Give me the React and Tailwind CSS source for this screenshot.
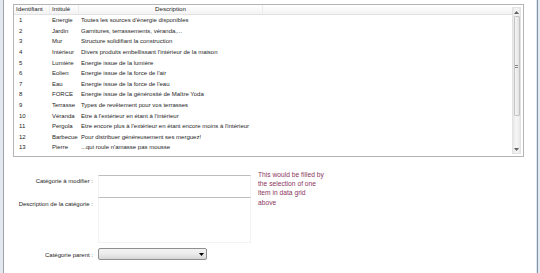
import React from "react";

const rows = [
  ["1", "Energie", "Toutes les sources d'énergie disponibles"],
  ["2", "Jardin", "Garnitures, terrassements, véranda,..."],
  ["3", "Mur", "Structure solidifiant la construction"],
  ["4", "Intérieur", "Divers produits embellissant l'intérieur de la maison"],
  ["5", "Lumière", "Energie issue de la lumière"],
  ["6", "Eolien", "Energie issue de la force de l'air"],
  ["7", "Eau", "Energie issue de la force de l'eau"],
  ["8", "FORCE", "Energie issue de la générosité de Maître Yoda"],
  ["9", "Terrasse", "Types de revêtement pour vos terrasses"],
  ["10", "Véranda", "Etre à l'extérieur en étant à l'intérieur"],
  ["11", "Pergola", "Etre encore plus à l'extérieur en étant encore moins à l'intérieur"],
  ["12", "Barbecue", "Pour distribuer généreusement ses merguez!"],
  ["13", "Pierre", "...qui roule n'amasse pas mousse"],
];

function ScrollBar() {
  return (
    <div className="w-[9px] my-[2px] mr-[2px] flex flex-col bg-gradient-to-r from-[#e8e8e8] via-[#f6f6f6] to-[#e8e8e8] border border-[#e2e2e2]">
      <div className="h-[8px] flex items-center justify-center">
        <svg width="5" height="3" viewBox="0 0 5 3"><path d="M0 3 L2.5 0 L5 3 Z" fill="#606060" /></svg>
      </div>
      <div className="h-[100px] mx-[0.5px] rounded-[1px] border border-[#c4c4c4] bg-gradient-to-r from-[#f6f6f6] to-[#e2e2e2] flex items-center justify-center">
        <div className="w-[3px] h-[3px] border-y border-[#8a8a8a]" />
      </div>
      <div className="flex-1" />
      <div className="h-[8px] flex items-center justify-center">
        <svg width="5" height="3" viewBox="0 0 5 3"><path d="M0 0 L2.5 3 L5 0 Z" fill="#606060" /></svg>
      </div>
    </div>
  );
}

export default function App() {
  return (
    <div className="w-[540px] h-[273px] bg-white flex overflow-hidden text-[#1e1e1e] font-['Liberation_Sans',Arial,sans-serif]">
      <div className="w-[4px] h-full flex">
        <div className="w-[3px] bg-[#e4e9ef]" />
        <div className="w-[1px] bg-[#9aa3ad]" />
      </div>
      <div className="flex-1 flex flex-col">
        <div className="ml-[9px] mt-[4px] w-[511px] h-[153px] border border-[#b4b4b4] flex">
          <div className="flex-1 flex flex-col text-[6px] leading-none">
            <div className="h-[10px] flex bg-gradient-to-b from-white to-[#f3f3f3] border-b border-[#e2e2e2] text-[6.2px] whitespace-nowrap">
              <div className="w-[36px] pl-[2px] flex items-center border-r border-[#ececec]">Identifiant</div>
              <div className="w-[29px] pl-[2px] flex items-center border-r border-[#ececec]">Intitulé</div>
              <div className="w-[184px] flex items-center justify-center border-r border-[#ececec]">Description</div>
              <div className="flex-1" />
            </div>
            {rows.map((r) => (
              <div key={r[0]} className="h-[10.6px] flex items-center whitespace-nowrap">
                <div className="w-[36px] pl-[5px]">{r[0]}</div>
                <div className="w-[29px] pl-[2px]">{r[1]}</div>
                <div className="pl-[2px]">{r[2]}</div>
              </div>
            ))}
          </div>
          <ScrollBar />
        </div>
        <div className="flex mt-[18px] text-[6px] leading-none">
          <div className="w-[89px] flex flex-col items-end">
            <div className="h-[22px] pt-[3px]">Catégorie à modifier :</div>
            <div className="h-[46px] pt-[4px]">Description de la catégorie :</div>
            <div className="h-[5px]" />
            <div className="h-[13px] flex items-center">Catégorie parent :</div>
          </div>
          <div className="ml-[5px] w-[153px] flex flex-col">
            <div className="h-[22px] border-t border-[#bdbdbd] border-x border-x-[#f3f3f3]" />
            <div className="h-[46px] border-t border-[#bdbdbd] border-x border-x-[#f3f3f3] border-b border-b-[#f3f3f3]" />
            <div className="h-[5px]" />
            <div className="w-[109px] h-[12px] border border-[#8e8f8f] rounded-[2px] bg-gradient-to-b from-[#f2f2f2] via-[#ebebeb] to-[#d6d6d6] flex items-center justify-end pr-[2px]">
              <svg width="5" height="3" viewBox="0 0 5 3"><path d="M0 0 L2.5 3 L5 0 Z" fill="#000" /></svg>
            </div>
          </div>
          <div className="ml-[7px] -mt-[5px] flex flex-col whitespace-nowrap text-[6.7px] leading-[9.2px] text-[#8b3560]">
            <span>This would be filled by</span>
            <span>the selection of one</span>
            <span>item in data grid</span>
            <span>above</span>
          </div>
        </div>
      </div>
      <div className="w-[4px] h-full flex">
        <div className="w-[1px] bg-[#dfe7ef]" />
        <div className="w-[1px] bg-[#7f93ab]" />
        <div className="w-[2px] bg-[#e4e9ef]" />
      </div>
    </div>
  );
}
